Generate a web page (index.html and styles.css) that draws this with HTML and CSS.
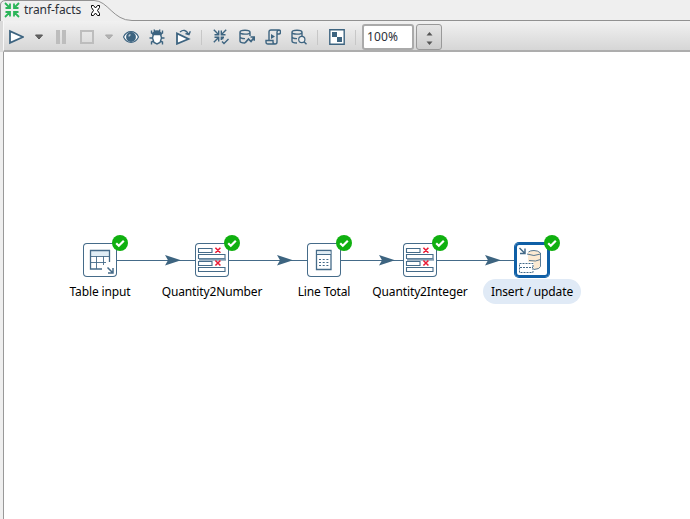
FILE: index.html
```html
<!DOCTYPE html>
<html lang="en">
<head>
<meta charset="utf-8">
<title>tranf-facts</title>
<link rel="stylesheet" href="styles.css">
</head>
<body>
<svg class="defs" width="0" height="0">
  <symbol id="database" viewBox="0 0 16 16"><path d="M1 3.2C1 .6 11 .6 11 3.2S1 5.8 1 3.2V12c0 1.4 2 2 5 2M11 3.2V7M1 7.5c0 1.5 2 2.2 5 2.1"/></symbol>
  <symbol id="check" viewBox="0 0 16 16"><circle cx="8" cy="8" r="8" fill="#10b010"/><path d="M4.2 8.2l2.6 2.5 5-5" fill="none" stroke="#fff" stroke-width="2.2"/></symbol>
  <symbol id="select" viewBox="0 0 34 34">
    <g fill="none" stroke="#456b89" stroke-width="1.1"><path d="M3.500 5.500h13.500v4H3.500zM3.500 11.500h26.500v4H3.500zM3.500 18.500h13.500v4H3.500zM3.500 24.500h26.500v4H3.500z"/></g>
    <path d="M4 15.500h27v2.200H4z" fill="#7f9ab0"/>
    <path d="M20.400 4.800l5 5m0-5l-5 5M20.400 17.500l5 5m0-5l-5 5" stroke="#ea1c36" stroke-width="1.600"/>
  </symbol>
</svg>
<div class="window">
  <header class="tabs">
    <svg class="tab-shape" width="690" height="21" viewBox="0 0 690 21"><path d="M0 0H690V21H0z" fill="#efefef"/><path d="M.5 21V5Q.5.5 6 .5H94C108 .5 113 20.500 132 20.500H690" fill="none" stroke="#919191"/></svg>
    <div class="tab">
      <svg width="16" height="16" viewBox="0 0 16 16" fill="none" stroke="#2bb559" stroke-width="1.800"><path d="M1 1l5 5M6 1.500V6H1.500M15 1l-5 5M10 1.500V6h4.500M1 15l5-5M1.500 10H6v4.500M15 15l-5-5M14.500 10H10v4.500"/></svg>
      <span class="tab-name">tranf-facts</span>
      <svg width="11" height="11" viewBox="0 0 11 11" fill="#fff" stroke="#000"><path d="M1.500.5h2l2 2.500 2-2.500h2v2L7.500 5.500l2 3v2h-2l-2-2.500-2 2.500h-2v-2l2-3-2-3z"/></svg>
    </div>
  </header>
  <nav class="toolbar">
    <svg class="icon" viewBox="0 0 16 16"><path d="M2 2.200v11.600L15 8z" fill="#fff" stroke-width="1.800"/></svg>
    <svg class="arrow first" viewBox="0 0 8 16"><path d="M.5 6h7L4 10z" fill="#666" stroke="#555"/></svg>
    <svg class="icon" viewBox="0 0 16 16"><path d="M3 1h4v14H3zM9 1h4v14H9z" fill="#bdbdbd" stroke="none"/></svg>
    <svg class="icon" viewBox="0 0 16 16"><path d="M2 2h12v12H2z" stroke="#bdbdbd" stroke-width="2"/></svg>
    <svg class="arrow" viewBox="0 0 8 16"><path d="M.5 6h7L4 10z" fill="#b4b4b4" stroke="#a8a8a8"/></svg>
    <svg class="icon" viewBox="0 0 16 16"><path d="M.5 8Q3 2.700 8 2.700T15.500 8Q13 13.300 8 13.300T.5 8z" fill="#fff" stroke-width="1.200"/><circle cx="8" cy="8" r="4.900" fill="#3d6480" stroke="none"/><path d="M6 7.500Q6 6 7.500 5.700" stroke="#c5d1d9"/></svg>
    <svg class="icon" viewBox="0 0 16 16"><path d="M5 5L2.500 4V1.500M11 5l2.500-1V1.500M4 9H.5M12 9h3.500M5 12l-2.500 1v2.500M11 12l2.500 1v2.500M6 3L5 .5M10 3l1-2.500"/><path d="M4.500 5h7l1 4-1.500 4.500L8 15l-3-1.500L3.500 9z" fill="#fff"/><path d="M4 5.500Q4.500 2 8 2t4 3.500z" fill="#3d6480"/></svg>
    <svg class="icon" viewBox="0 0 16 16"><path d="M2 4.500v10.300L13.500 10z" fill="#fff" stroke-width="1.800"/><path d="M5 3Q10-1 13.500 5M10.500 4.500l3.500 1.200 1.300-3.500"/></svg>
    <i class="separator"></i>
    <svg class="icon after" viewBox="0 0 16 16"><path d="M.8.8L5.500 5.500M5.700 1.500v4.200H1.500M13.200.8L8.500 5.500M8.300 1.500v4.200h4.200M.8 13.200L5.500 8.500M1.500 8.300h4.200v4.200M8.300 11V8.300H11M8.300 8.300l2 2M9 12.500l2 2 4.500-4.500"/></svg>
    <svg class="icon" viewBox="0 0 16 16"><use href="#database"/><path d="M6 14l3.500-4 2.500 2.500L15 8.500M11.500 8h3.800v3.800" stroke-width="1.700"/></svg>
    <svg class="icon" viewBox="0 0 16 16"><path d="M4 11V3q0-2 2-2h8q1.500 0 1.500 2t-1.500 2h-2v8q0 2-2 2H3q-2 0-2-2v-1.500h7V13q0 2 2 2M12 5V3q0-1.500 2-2"/><path d="M6 5l4 2.500L6 10z" fill="#3d6480" stroke="none"/></svg>
    <svg class="icon" viewBox="0 0 16 16"><use href="#database"/><circle cx="10.800" cy="10.500" r="3.100" fill="#eee" stroke-width="1.200"/><path d="M13 12.800l2.500 2.500"/></svg>
    <i class="separator"></i>
    <svg class="icon after" viewBox="0 0 16 16"><path d="M.8.8h14.400v14.400H.8z" fill="#fff"/><path d="M3 3h5v5H3zM8 8h5v5H8z" fill="#3d6480" stroke="none"/></svg>
    <i class="separator"></i>
    <div class="zoom">100%</div>
    <div class="spinner"><svg width="7" height="13" viewBox="0 0 7 13" fill="#555"><path d="M.5 3.500L3.500 0l3 3.500zM.5 9.500h6L3.500 13z"/></svg></div>
  </nav>
  <main class="canvas">
    <svg class="hops" width="690" height="467" viewBox="0 52 690 467"><path d="M117 260.500h79M229 260.500h79M341 260.500h63M437 260.500h79" stroke="#456b89"/><path id="head" d="M165 255l16 5.200-16 5.300 3-5.300z" fill="#3d6480"/><use href="#head" x="112"/><use href="#head" x="214"/><use href="#head" x="320"/></svg>
    <section class="node n1"><div class="box"><svg width="34" height="34" viewBox="0 0 34 34" fill="none" stroke="#456b89"><path d="M8 8h18v5H8z" fill="#e0edf5" stroke="none"/><path d="M19 26H7.500V7.500h19V19" stroke-width="1.300"/><path d="M8 13.500h18M8 19.500h15M13.500 13v13M20.500 13v9" stroke-width=".9"/><path d="M24.500 24.500l5 5M30 25v5h-5" stroke-width="1.500"/></svg><svg class="badge"><use href="#check"/></svg></div><span class="label">Table input</span></section>
    <section class="node n2"><div class="box"><svg width="34" height="34"><use href="#select"/></svg><svg class="badge"><use href="#check"/></svg></div><span class="label">Quantity2Number</span></section>
    <section class="node n3"><div class="box"><svg width="34" height="34" viewBox="0 0 34 34" fill="none" stroke="#456b89"><path d="M9.500 7.500h14.500v19h-14.500z" stroke-width="1.300"/><path d="M10 8.500h13.500v2.500H10z" fill="#e0edf5" stroke="none"/><path d="M10 11.500h14"/><path d="M12 16.500h10M12 19.500h10M12 22.500h10" stroke-dasharray="2 1.700"/></svg><svg class="badge"><use href="#check"/></svg></div><span class="label">Line Total</span></section>
    <section class="node n4"><div class="box"><svg width="34" height="34"><use href="#select"/></svg><svg class="badge"><use href="#check"/></svg></div><span class="label">Quantity2Integer</span></section>
    <section class="node n5 selected"><div class="box"><svg width="34" height="34" viewBox="0 0 34 34" fill="none" stroke="#456b89"><path d="M13 10Q13 7.500 19 7.500T25 10v14Q25 26.500 19 26.500H13z" fill="#fcead2" stroke="none"/><path d="M13.500 9Q15 7.500 19 7.500T25.500 10v13.500Q25 26 19 26.500M12 11q7 3 13.500 0M14 17.500q7 1.500 11.500-1" stroke-width=".9"/><path d="M3.500 19h15v11h-15z" fill="#fff" stroke="none"/><path d="M4.500 20.500h13.500v9H4.500z" stroke-dasharray="2 1"/><path d="M5 24.500h13" stroke-dasharray="2 1"/><path d="M4.500 5l5 5M10 5.500v5H5" stroke-width="1.500"/></svg><svg class="badge"><use href="#check"/></svg></div><span class="label">Insert / update</span></section>
  </main>
</div>
</body>
</html>
```
FILE: styles.css
```css
* { box-sizing: border-box; }
body { margin: 0; background: #efefef; font: 12px "Noto Sans", sans-serif; color: #000; }
svg { display: block; flex: none; }
.defs { position: absolute; }
.window { width: 690px; height: 519px; overflow: hidden; display: flex; flex-direction: column; }
.tabs { position: relative; height: 21px; flex: none; }
.tab-shape { position: absolute; top: 0; left: 0; }
.tab { position: relative; display: flex; align-items: center; height: 20px; padding-left: 4px; }
.tab-name { width: 66px; margin-left: 4px; color: #2b2f38; line-height: 20px; white-space: nowrap; letter-spacing: -.06px; }
.toolbar {
  flex: none; display: flex; align-items: center; gap: 10px; height: 31px;
  padding: 3px 0 0 4px; margin-left: 3px; border-left: 1px solid #f8f8f8;
  border-bottom: 2px solid #adadad; background: linear-gradient(#f1f1f1, #d6d6d6);
  box-shadow: -3px 0 #dadada;
}
.icon { width: 16px; height: 16px; fill: none; stroke: #3d6480; stroke-width: 1.4; }
.arrow { width: 8px; height: 16px; }
.first, .after { margin-left: 1px; }
.separator { flex: none; width: 1px; height: 15px; background: #c7c7c7; }
.zoom { width: 52px; height: 26px; margin-left: -4px; padding-left: 3px; border: 2px solid #aaa; border-radius: 3px; background: #fff; color: #2b2f38; line-height: 22px; letter-spacing: .1px; }
.spinner { width: 26px; height: 26px; margin-left: -8px; display: flex; align-items: center; justify-content: center; padding-top: 2px; border: 1px solid #999; border-radius: 3px; background: linear-gradient(#e5e5e5, #ccc); }
.canvas { position: relative; flex: 1; margin-left: 3px; border-left: 1px solid #999; background: #fff; }
.hops { position: absolute; left: -4px; top: 0; }
.node { position: absolute; top: 191px; width: 120px; display: flex; flex-direction: column; align-items: center; }
.n1 { left: 36px; }
.n2 { left: 148px; }
.n3 { left: 260px; }
.n4 { left: 356px; }
.n5 { left: 468px; }
.box { position: relative; width: 34px; height: 34px; border-radius: 4px; background: #fff; box-shadow: inset 0 0 0 1px #456b89; }
.selected .box { box-shadow: inset 0 0 0 2px #0f5fa6, 0 0 0 1px #0f5fa6; }
.badge { position: absolute; top: -8px; right: -11px; width: 16px; height: 16px; }
.label { height: 25px; margin-top: 2px; padding: 0 8px; border-radius: 13px; line-height: 25px; white-space: nowrap; letter-spacing: -.13px; }
.selected .label { background: #e0eaf6; }
```
